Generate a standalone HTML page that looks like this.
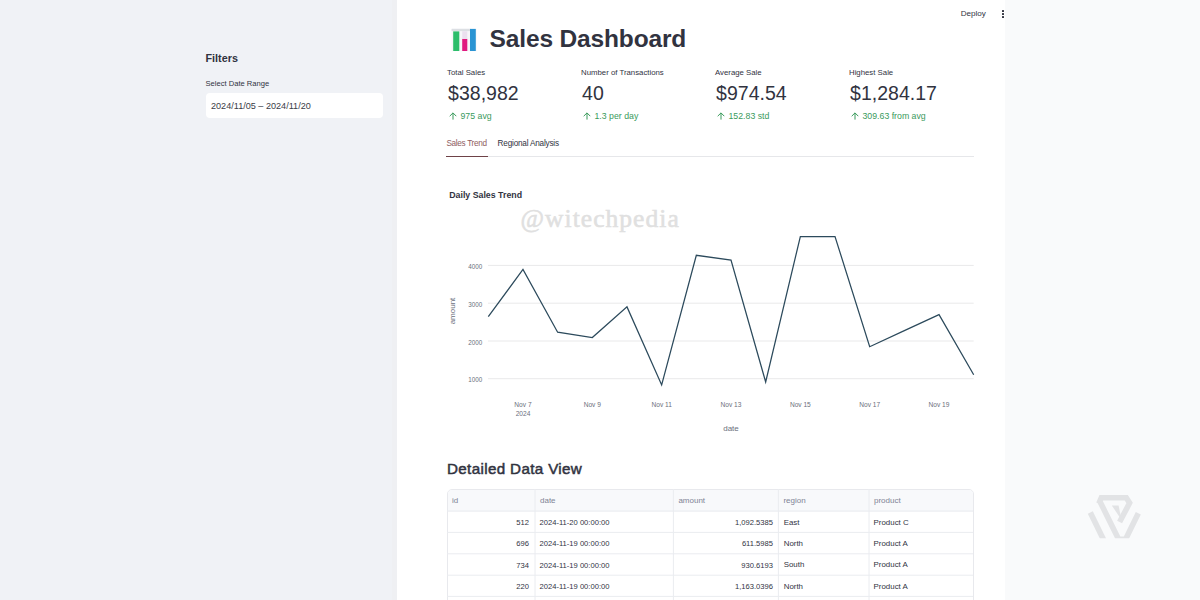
<!DOCTYPE html>
<html><head><meta charset="utf-8"><title>Sales Dashboard</title>
<style>
html,body{margin:0;padding:0;width:1200px;height:600px;overflow:hidden;background:#fff;font-family:"Liberation Sans", sans-serif;}
.t{position:absolute;white-space:nowrap;line-height:1;}
</style></head><body>
<div style="position:absolute;left:0;top:0;width:397px;height:600px;background:#f0f2f6"></div>
<div style="position:absolute;left:392px;top:0;width:5px;height:600px;background:#eff0f3"></div>
<div style="position:absolute;left:397px;top:0;width:608px;height:600px;background:#ffffff"></div>
<div style="position:absolute;left:1005px;top:0;width:195px;height:600px;background:#f9fafb"></div>
<div class="t" style="left:205.50px;top:52.56px;font-size:10.8px;color:#31333F;font-weight:700;">Filters</div>
<div class="t" style="left:205.50px;top:79.87px;font-size:7.6px;color:#31333F;font-weight:400;">Select Date Range</div>
<div style="position:absolute;left:206px;top:93px;width:176.5px;height:24.5px;background:#fff;border-radius:4px"></div>
<div class="t" style="left:211.00px;top:101.60px;font-size:9.1px;color:#3a3c47;font-weight:400;">2024/11/05 – 2024/11/20</div>
<div class="t" style="left:960.80px;top:10.24px;font-size:8.1px;color:#31333F;font-weight:400;letter-spacing:-0.05px;">Deploy</div>
<div style="position:absolute;left:1002px;top:9.70px;width:2px;height:2px;background:#31333F;border-radius:0.5px"></div>
<div style="position:absolute;left:1002px;top:13.00px;width:2px;height:2px;background:#31333F;border-radius:0.5px"></div>
<div style="position:absolute;left:1002px;top:16.30px;width:2px;height:2px;background:#31333F;border-radius:0.5px"></div>
<svg style="position:absolute;left:451px;top:28px" width="27" height="24" viewBox="0 0 27 24">
<rect x="0.6" y="0.8" width="25" height="22.4" fill="#f6f6f9"/>
<rect x="0.6" y="0.8" width="19" height="2.3" fill="#dcdfe3"/>
<rect x="2.2" y="3.4" width="6.1" height="19.6" fill="#2cbd6b"/>
<rect x="11.2" y="10.9" width="5.1" height="12.1" fill="#e0197f"/>
<rect x="11.2" y="3.2" width="5.1" height="7.7" fill="#ebe0ef"/>
<rect x="19" y="0.9" width="5.8" height="22.1" fill="#2a94d3"/>
</svg>
<div class="t" style="left:489.60px;top:26.86px;font-size:24.5px;color:#31333F;font-weight:700;letter-spacing:-0.15px;">Sales Dashboard</div>
<div class="t" style="left:447.00px;top:68.50px;font-size:7.8px;color:#31333F;font-weight:400;">Total Sales</div>
<div class="t" style="left:448.10px;top:84.49px;font-size:19.5px;color:#31333F;font-weight:400;">$38,982</div>
<svg style="position:absolute;left:448.6px;top:112px" width="8" height="8" viewBox="0 0 8 8"><path d="M4 7.6V0.9M0.7 4.2L4 0.9L7.3 4.2" stroke="#3a9a5c" stroke-width="1" fill="none"/></svg>
<div class="t" style="left:460.50px;top:111.89px;font-size:8.75px;color:#3a9a5c;font-weight:400;">975 avg</div>
<div class="t" style="left:581.00px;top:68.50px;font-size:7.8px;color:#31333F;font-weight:400;">Number of Transactions</div>
<div class="t" style="left:582.10px;top:84.49px;font-size:19.5px;color:#31333F;font-weight:400;">40</div>
<svg style="position:absolute;left:582.6px;top:112px" width="8" height="8" viewBox="0 0 8 8"><path d="M4 7.6V0.9M0.7 4.2L4 0.9L7.3 4.2" stroke="#3a9a5c" stroke-width="1" fill="none"/></svg>
<div class="t" style="left:594.50px;top:111.89px;font-size:8.75px;color:#3a9a5c;font-weight:400;">1.3 per day</div>
<div class="t" style="left:715.00px;top:68.50px;font-size:7.8px;color:#31333F;font-weight:400;">Average Sale</div>
<div class="t" style="left:716.10px;top:84.49px;font-size:19.5px;color:#31333F;font-weight:400;">$974.54</div>
<svg style="position:absolute;left:716.6px;top:112px" width="8" height="8" viewBox="0 0 8 8"><path d="M4 7.6V0.9M0.7 4.2L4 0.9L7.3 4.2" stroke="#3a9a5c" stroke-width="1" fill="none"/></svg>
<div class="t" style="left:728.50px;top:111.89px;font-size:8.75px;color:#3a9a5c;font-weight:400;">152.83 std</div>
<div class="t" style="left:849.00px;top:68.50px;font-size:7.8px;color:#31333F;font-weight:400;">Highest Sale</div>
<div class="t" style="left:850.10px;top:84.49px;font-size:19.5px;color:#31333F;font-weight:400;">$1,284.17</div>
<svg style="position:absolute;left:850.6px;top:112px" width="8" height="8" viewBox="0 0 8 8"><path d="M4 7.6V0.9M0.7 4.2L4 0.9L7.3 4.2" stroke="#3a9a5c" stroke-width="1" fill="none"/></svg>
<div class="t" style="left:862.50px;top:111.89px;font-size:8.75px;color:#3a9a5c;font-weight:400;">309.63 from avg</div>
<div class="t" style="left:446.40px;top:140.16px;font-size:8.2px;color:#8f5d61;font-weight:400;letter-spacing:-0.3px;">Sales Trend</div>
<div class="t" style="left:497.60px;top:140.36px;font-size:8.2px;color:#31333F;font-weight:400;letter-spacing:-0.2px;">Regional Analysis</div>
<div style="position:absolute;left:446px;top:156px;width:528px;height:1px;background:#e6e7ea"></div>
<div style="position:absolute;left:446px;top:155.8px;width:42px;height:1.5px;background:#6e4247"></div>
<div class="t" style="left:449.20px;top:190.55px;font-size:8.8px;color:#31333F;font-weight:700;">Daily Sales Trend</div>
<div class="t" style="left:520.50px;top:205.71px;font-size:25.5px;color:#e0e0e0;font-weight:400;font-family:'Liberation Serif', serif;letter-spacing:1.05px;-webkit-text-stroke:0.55px #e0e0e0;">@witechpedia</div>
<svg style="position:absolute;left:0;top:0" width="1200" height="600"><line x1="488" y1="265.4" x2="973.7" y2="265.4" stroke="#e9e9ea" stroke-width="1"/><line x1="488" y1="303.2" x2="973.7" y2="303.2" stroke="#e9e9ea" stroke-width="1"/><line x1="488" y1="341.0" x2="973.7" y2="341.0" stroke="#e9e9ea" stroke-width="1"/><line x1="488" y1="378.7" x2="973.7" y2="378.7" stroke="#e9e9ea" stroke-width="1"/><polyline points="488.30,316.70 522.97,269.50 557.64,332.20 592.31,337.50 626.99,306.90 661.66,385.00 696.33,255.30 731.00,260.10 765.67,382.00 800.34,236.50 835.01,236.50 869.69,346.70 904.36,330.60 939.03,314.60 973.70,374.70" fill="none" stroke="#2c4a5c" stroke-width="1.25" stroke-linejoin="miter"/></svg>
<div class="t" style="right:717.70px;top:264.07px;font-size:6.3px;color:#6b6f7c;font-weight:400;text-align:right;">4000</div>
<div class="t" style="right:717.70px;top:301.87px;font-size:6.3px;color:#6b6f7c;font-weight:400;text-align:right;">3000</div>
<div class="t" style="right:717.70px;top:339.67px;font-size:6.3px;color:#6b6f7c;font-weight:400;text-align:right;">2000</div>
<div class="t" style="right:717.70px;top:377.37px;font-size:6.3px;color:#6b6f7c;font-weight:400;text-align:right;">1000</div>
<div class="t" style="left:422.97px;width:200px;text-align:center;top:401.91px;font-size:6.6px;color:#6b6f7c;font-weight:400;">Nov 7</div>
<div class="t" style="left:492.31px;width:200px;text-align:center;top:401.91px;font-size:6.6px;color:#6b6f7c;font-weight:400;">Nov 9</div>
<div class="t" style="left:561.66px;width:200px;text-align:center;top:401.91px;font-size:6.6px;color:#6b6f7c;font-weight:400;">Nov 11</div>
<div class="t" style="left:631.00px;width:200px;text-align:center;top:401.91px;font-size:6.6px;color:#6b6f7c;font-weight:400;">Nov 13</div>
<div class="t" style="left:700.34px;width:200px;text-align:center;top:401.91px;font-size:6.6px;color:#6b6f7c;font-weight:400;">Nov 15</div>
<div class="t" style="left:769.69px;width:200px;text-align:center;top:401.91px;font-size:6.6px;color:#6b6f7c;font-weight:400;">Nov 17</div>
<div class="t" style="left:839.03px;width:200px;text-align:center;top:401.91px;font-size:6.6px;color:#6b6f7c;font-weight:400;">Nov 19</div>
<div class="t" style="left:422.97px;width:200px;text-align:center;top:411.21px;font-size:6.6px;color:#6b6f7c;font-weight:400;">2024</div>
<div class="t" style="left:631.00px;width:200px;text-align:center;top:424.73px;font-size:8px;color:#6b6f7c;font-weight:400;">date</div>
<div class="t" style="left:412.5px;top:306px;width:80px;text-align:center;font-size:8px;line-height:10px;color:#6b6f7c;transform:rotate(-90deg)">amount</div>
<div class="t" style="left:447.00px;top:461.23px;font-size:15.2px;color:#31333F;font-weight:400;-webkit-text-stroke:0.5px #31333F;letter-spacing:0.35px;">Detailed Data View</div>
<div style="position:absolute;left:447px;top:489px;width:527px;height:130px;border:1px solid #e8e9ed;border-radius:5px;box-sizing:border-box;overflow:hidden"><div style="position:absolute;left:0;top:0;width:100%;height:22px;background:#f8f9fb"></div></div>
<svg style="position:absolute;left:0;top:0" width="1200" height="600"><line x1="535" y1="489" x2="535" y2="600" stroke="#eaecf0" stroke-width="1"/><line x1="673.4" y1="489" x2="673.4" y2="600" stroke="#eaecf0" stroke-width="1"/><line x1="778.4" y1="489" x2="778.4" y2="600" stroke="#eaecf0" stroke-width="1"/><line x1="869" y1="489" x2="869" y2="600" stroke="#eaecf0" stroke-width="1"/><line x1="447" y1="511" x2="973" y2="511" stroke="#eaecf0" stroke-width="1"/><line x1="447" y1="532.4" x2="973" y2="532.4" stroke="#eaecf0" stroke-width="1"/><line x1="447" y1="553.8" x2="973" y2="553.8" stroke="#eaecf0" stroke-width="1"/><line x1="447" y1="575.2" x2="973" y2="575.2" stroke="#eaecf0" stroke-width="1"/><line x1="447" y1="596.4" x2="973" y2="596.4" stroke="#eaecf0" stroke-width="1"/></svg>
<div class="t" style="left:452.00px;top:496.93px;font-size:8px;color:#808495;font-weight:400;">id</div>
<div class="t" style="left:540.00px;top:496.93px;font-size:8px;color:#808495;font-weight:400;">date</div>
<div class="t" style="left:678.40px;top:496.93px;font-size:8px;color:#808495;font-weight:400;">amount</div>
<div class="t" style="left:783.40px;top:496.93px;font-size:8px;color:#808495;font-weight:400;">region</div>
<div class="t" style="left:874.00px;top:496.93px;font-size:8px;color:#808495;font-weight:400;">product</div>
<div class="t" style="right:671.00px;top:518.87px;font-size:7.6px;color:#31333F;font-weight:400;text-align:right;">512</div>
<div class="t" style="left:539.50px;top:518.87px;font-size:7.6px;color:#31333F;font-weight:400;">2024-11-20 00:00:00</div>
<div class="t" style="right:427.00px;top:518.87px;font-size:7.6px;color:#31333F;font-weight:400;text-align:right;">1,092.5385</div>
<div class="t" style="left:783.70px;top:518.61px;font-size:7.9px;color:#31333F;font-weight:400;">East</div>
<div class="t" style="left:873.60px;top:518.61px;font-size:7.9px;color:#31333F;font-weight:400;">Product C</div>
<div class="t" style="right:671.00px;top:540.27px;font-size:7.6px;color:#31333F;font-weight:400;text-align:right;">696</div>
<div class="t" style="left:539.50px;top:540.27px;font-size:7.6px;color:#31333F;font-weight:400;">2024-11-19 00:00:00</div>
<div class="t" style="right:427.00px;top:540.27px;font-size:7.6px;color:#31333F;font-weight:400;text-align:right;">611.5985</div>
<div class="t" style="left:783.70px;top:540.01px;font-size:7.9px;color:#31333F;font-weight:400;">North</div>
<div class="t" style="left:873.60px;top:540.01px;font-size:7.9px;color:#31333F;font-weight:400;">Product A</div>
<div class="t" style="right:671.00px;top:561.67px;font-size:7.6px;color:#31333F;font-weight:400;text-align:right;">734</div>
<div class="t" style="left:539.50px;top:561.67px;font-size:7.6px;color:#31333F;font-weight:400;">2024-11-19 00:00:00</div>
<div class="t" style="right:427.00px;top:561.67px;font-size:7.6px;color:#31333F;font-weight:400;text-align:right;">930.6193</div>
<div class="t" style="left:783.70px;top:561.41px;font-size:7.9px;color:#31333F;font-weight:400;">South</div>
<div class="t" style="left:873.60px;top:561.41px;font-size:7.9px;color:#31333F;font-weight:400;">Product A</div>
<div class="t" style="right:671.00px;top:583.07px;font-size:7.6px;color:#31333F;font-weight:400;text-align:right;">220</div>
<div class="t" style="left:539.50px;top:583.07px;font-size:7.6px;color:#31333F;font-weight:400;">2024-11-19 00:00:00</div>
<div class="t" style="right:427.00px;top:583.07px;font-size:7.6px;color:#31333F;font-weight:400;text-align:right;">1,163.0396</div>
<div class="t" style="left:783.70px;top:582.81px;font-size:7.9px;color:#31333F;font-weight:400;">North</div>
<div class="t" style="left:873.60px;top:582.81px;font-size:7.9px;color:#31333F;font-weight:400;">Product A</div>
<svg style="position:absolute;left:1080px;top:488px" width="65" height="60" viewBox="0 0 65 60">
<defs><clipPath id="lc"><rect x="0" y="0" width="65" height="50.3"/></clipPath></defs>
<g fill="none" stroke="#e2e3e5" stroke-width="5.6" stroke-linejoin="miter" stroke-miterlimit="10" clip-path="url(#lc)">
<path d="M18.8 15.5 L21.3 9.8 L46.3 9.8 L49.6 15 L39.6 34"/>
<path d="M19.8 13.2 L38.6 51.2 L45.6 51.2 L58.3 25.2"/>
<path d="M10.3 24.6 L24.2 53"/>
</g>
<polygon points="31.8,17.4 38.6,17.4 41.5,32" fill="#e2e3e5"/>
</svg>
</body></html>
